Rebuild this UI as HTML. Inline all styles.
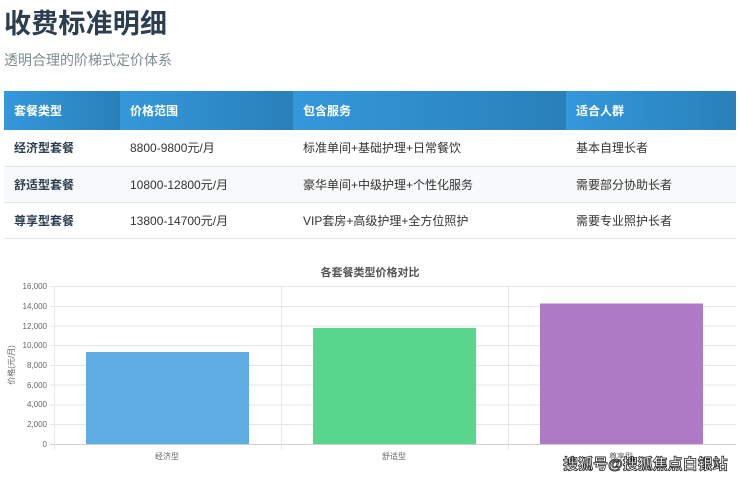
<!DOCTYPE html>
<html><head><meta charset="utf-8"><style>
*{margin:0;padding:0;box-sizing:border-box}
body{width:740px;height:480px;background:#fff;font-family:"Liberation Sans","Noto Sans CJK SC",sans-serif;position:relative;overflow:hidden;color:#333}
h1{position:absolute;left:4px;top:2px;font-size:27px;font-weight:bold;color:#2c3e50;letter-spacing:0.2px}
.sub{position:absolute;left:4px;top:50px;font-size:14px;color:#7f8c8d}
table{position:absolute;left:4px;top:91px;width:732px;border-collapse:collapse;font-size:12px}
th{height:39px;color:#fff;text-align:left;padding-left:10px;font-weight:bold;background:linear-gradient(90deg,#3498db,#2980b9)}
td{height:36px;padding-left:10px;border-bottom:1px solid #e3e6e8;color:#333}
td:first-child{font-weight:bold;color:#2c3e50}
tr.alt td{background:#f8f9fa}
.wm{position:absolute;left:563px;top:453px;font-size:15px;font-weight:bold;color:#fff;-webkit-text-stroke:0.8px #222;letter-spacing:0}
</style></head><body>
<h1>收费标准明细</h1>
<div class="sub">透明合理的阶梯式定价体系</div>
<table>
<tr><th style="width:116px">套餐类型</th><th style="width:173px">价格范围</th><th style="width:273px">包含服务</th><th>适合人群</th></tr>
<tr><td>经济型套餐</td><td>8800-9800元/月</td><td>标准单间+基础护理+日常餐饮</td><td>基本自理长者</td></tr>
<tr class="alt"><td>舒适型套餐</td><td>10800-12800元/月</td><td>豪华单间+中级护理+个性化服务</td><td>需要部分协助长者</td></tr>
<tr><td>尊享型套餐</td><td>13800-14700元/月</td><td>VIP套房+高级护理+全方位照护</td><td>需要专业照护长者</td></tr>
</table>
<svg width="740" height="480" style="position:absolute;left:0;top:0" font-family="Liberation Sans,Noto Sans CJK SC,sans-serif">
<text x="370" y="276" text-anchor="middle" font-size="11" font-weight="bold" fill="#555">各套餐类型价格对比</text>
<g stroke="#e6e6e6" stroke-width="1">
<line x1="50" y1="286.5" x2="736" y2="286.5"/><line x1="50" y1="306.5" x2="736" y2="306.5"/>
<line x1="50" y1="326" x2="736" y2="326"/><line x1="50" y1="345.5" x2="736" y2="345.5"/>
<line x1="50" y1="365.5" x2="736" y2="365.5"/><line x1="50" y1="385" x2="736" y2="385"/>
<line x1="50" y1="405" x2="736" y2="405"/><line x1="50" y1="424.5" x2="736" y2="424.5"/>
<line x1="50" y1="444.5" x2="736" y2="444.5" stroke="#d0d0d0"/>
<line x1="54.5" y1="286" x2="54.5" y2="450"/><line x1="281.5" y1="286" x2="281.5" y2="450"/>
<line x1="508.5" y1="286" x2="508.5" y2="450"/>
</g>
<g font-size="8" fill="#666" text-anchor="end">
<text x="47" y="289">16,000</text><text x="47" y="309">14,000</text><text x="47" y="329">12,000</text>
<text x="47" y="348">10,000</text><text x="47" y="368">8,000</text><text x="47" y="388">6,000</text>
<text x="47" y="407">4,000</text><text x="47" y="427">2,000</text><text x="47" y="447">0</text>
</g>
<text transform="translate(14,365) rotate(-90)" text-anchor="middle" font-size="8" fill="#666">价格(元/月)</text>
<rect x="86" y="352" width="163" height="92" fill="#5dade2"/>
<rect x="313" y="328" width="163" height="116" fill="#58d68d"/>
<rect x="540" y="303.5" width="163" height="140.5" fill="#af7ac5"/>
<g font-size="8" fill="#666" text-anchor="middle">
<text x="167" y="459">经济型</text><text x="394" y="459">舒适型</text><text x="621" y="459">尊享型</text>
</g>
</svg>
<div class="wm">搜狐号@搜狐焦点白银站</div>
</body></html>
